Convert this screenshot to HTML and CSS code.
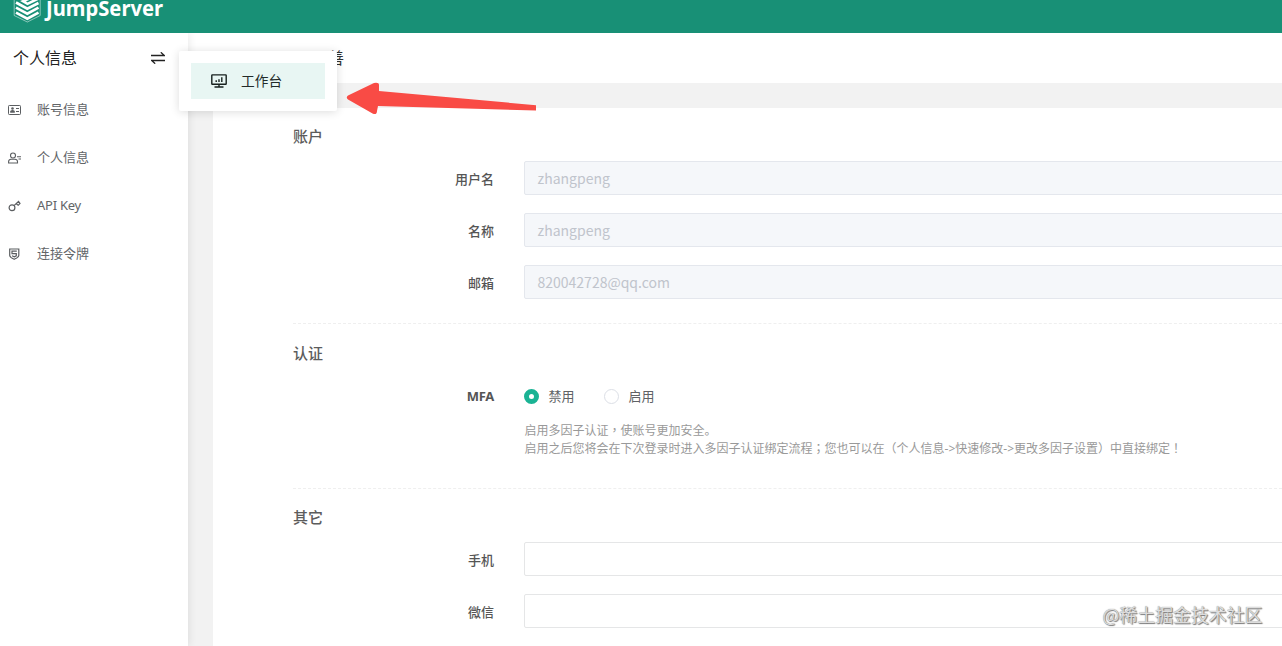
FILE: index.html
```html
<!DOCTYPE html>
<html lang="zh-CN">
<head>
<meta charset="utf-8">
<title>JumpServer</title>
<link rel="stylesheet" href="styles.css">
</head>
<body>
<header class="topbar">
  <svg class="logo" width="180" height="33" viewBox="0 0 180 33">
    <path d="M14.2 -8V15.5L27.3 22L40.200 15.500V-8" fill="none" stroke="#fff" stroke-width=".7" opacity=".7"/>
    <g fill="none" stroke="#fff" stroke-width="2.600">
      <path d="M33 -3L23 1.200L27.500 3.800L38.500 -1.500"/>
      <path d="M16 2.500L27.300 8.700L38.500 3"/>
      <path d="M16 7.700L27.300 13.700L38.500 7.700"/>
      <path d="M16 12.700L27.300 18.700L38.500 12.700"/>
    </g>
    <text class="logo-text" x="46" y="16.400" textLength="117" lengthAdjust="spacingAndGlyphs">JumpServer</text>
  </svg>
</header>
<div class="layout">
  <aside class="sidebar">
    <div class="side-head">
      <span>个人信息</span>
      <svg width="14" height="12" viewBox="0 0 14 12" fill="none" stroke="#222" stroke-width="1.3"><path d="M0 3.500H13.300L9.800 .3M14 8.500H.7L4.200 11.700"/></svg>
    </div>
    <nav class="menu">
      <a class="item"><svg width="13" height="12" viewBox="0 0 13 12" fill="none" stroke="#5b5e61"><rect x=".5" y="1.500" width="12" height="9" rx=".8"/><path d="M8 4.500h3M8 7.500h3"/><circle cx="4.500" cy="4.500" r="1.300" fill="#5b5e61" stroke="none"/><path d="M2.200 8.800V7Q4.500 5 6.800 7V8.800Z" fill="#5b5e61" stroke="none"/></svg>账号信息</a>
      <a class="item"><svg width="13" height="12" viewBox="0 0 13 12" fill="none" stroke="#5b5e61" stroke-width="1.100"><circle cx="5" cy="3.500" r="2.500"/><path d="M.6 11V9.500Q.8 7.300 3 7.200H7Q9.300 7.300 9.500 9.500V11ZM9 4.700h4M10.500 7h2.500"/></svg>个人信息</a>
      <a class="item latin"><svg width="13" height="12" viewBox="0 0 13 12" fill="none" stroke="#5b5e61" stroke-width="1.200"><circle cx="4" cy="7.700" r="2.900"/><path d="M6 5.600L11 1M8.200 3.700L10.200 5.300L12 3.400L10.500 1.400"/></svg>API Key</a>
      <a class="item"><svg width="13" height="12" viewBox="0 0 13 12" fill="none" stroke="#5b5e61" stroke-width="1.200"><path d="M1.700 1H10.800V7.500Q10.500 9.500 6.200 11.300Q2 9.500 1.700 7.500Z"/><path d="M8.800 3.200H4V5.700H8.300V7.800L6.300 8.900L4 7.800"/></svg>连接令牌</a>
    </nav>
  </aside>
  <main class="main">
    <div class="page-head"><h1>善</h1></div>
    <section class="card">
      <h2>账户</h2>
      <div class="row"><label>用户名</label><div class="input disabled">zhangpeng</div></div>
      <div class="row"><label>名称</label><div class="input disabled">zhangpeng</div></div>
      <div class="row"><label>邮箱</label><div class="input disabled">820042728@qq.com</div></div>
      <hr>
      <h2>认证</h2>
      <div class="row radio-row"><label>MFA</label>
        <div class="radios"><span class="radio"><i class="dot on"></i>禁用</span><span class="radio"><i class="dot"></i>启用</span></div>
      </div>
      <p class="help">启用多因子认证<span class="mid" lang="zh-TW">，</span>使账号更加安全。<br>启用之后您将会在下次登录时进入多因子认证绑定流程<span class="mid" lang="zh-TW">；</span>您也可以在<span class="mid" lang="zh-TW">（</span>个人信息-&gt;快速修改-&gt;更改多因子设置<span class="mid" lang="zh-TW">）</span>中直接绑定<span class="mid" lang="zh-TW">！</span></p>
      <hr>
      <h2>其它</h2>
      <div class="row"><label>手机</label><div class="input"></div></div>
      <div class="row"><label>微信</label><div class="input"></div></div>
    </section>
  </main>
</div>
<div class="popup">
  <div class="popup-item">
    <svg width="16" height="14" viewBox="0 0 16 14" fill="none" stroke="#17211f" stroke-width="1.400"><rect x=".8" y=".9" width="14.400" height="9.300" rx=".5"/><path d="M8 10.200V13M3.500 13H12.500M5.200 6.200V8M8 5.200V8M10.800 3.300V8"/></svg>
    <span>工作台</span>
  </div>
</div>
<svg class="arrow" width="192" height="34" viewBox="0 0 192 34"><path d="M2 13.500L28 .9Q33 0 33 3V9L190 23.200V28.500L32 24L31 29Q31 33 27 31.800L2 17.500Q-.5 15.500 2 13.500Z" fill="#f94b45"/></svg>
<div class="watermark">@稀土掘金技术社区</div>
</body>
</html>
```
FILE: styles.css
```css
* { box-sizing: border-box; }
body {
  margin: 0;
  width: 1282px;
  height: 646px;
  overflow: hidden;
  display: flex;
  flex-direction: column;
  position: relative;
  background: #f2f2f2;
  color: #606266;
  font: 13px/18px "Noto Sans", "Noto Sans CJK SC", sans-serif;
}
.topbar { height: 33px; flex: none; background: #189076; }
.logo { display: block; }
.logo-text { font: bold 21.5px "Noto Sans", sans-serif; fill: #fff; }
.layout { flex: 1; display: flex; min-height: 0; }
.sidebar {
  width: 188px;
  flex: none;
  background: #fff;
  box-shadow: 1px 0 8px rgba(0, 0, 0, .09);
  clip-path: inset(0 -10px 0 0);
  z-index: 1;
}
.side-head {
  height: 52px;
  padding: 0 23px 2px 13px;
  display: flex;
  align-items: center;
  justify-content: space-between;
  font-size: 16px;
  color: #222;
}
.menu { display: flex; flex-direction: column; }
.item {
  height: 48px;
  padding-left: 8px;
  display: flex;
  align-items: center;
  gap: 16px;
  color: #626568;
}
.item svg { margin-top: 1px; }
.latin { letter-spacing: -.25px; }
.main { flex: 1; min-width: 0; display: flex; flex-direction: column; overflow: hidden; }
.page-head { height: 50px; flex: none; background: #fff; padding-left: 140px; }
h1 { margin: 0; font-size: 16px; line-height: 50px; font-weight: 400; color: #333; }
.card {
  flex: 1;
  margin: 25px 0 0 25px;
  padding: 18px 0 0 80px;
  background: #fff;
}
h2 { margin: 0 0 15px; font-size: 15px; line-height: 20px; font-weight: 500; color: #5c5c5c; }
.row { display: flex; align-items: center; height: 34px; margin-bottom: 18px; }
label {
  width: 201px;
  margin-right: 29.500px;
  padding-top: 1px;
  flex: none;
  text-align: right;
  font-weight: 500;
  color: #555;
}
.input {
  flex: 1;
  height: 34px;
  margin-right: -4px;
  padding: 0 13px;
  border: 1px solid #e5e6e7;
  border-radius: 2px;
  font: 14px/33px "Noto Sans CJK SC", sans-serif;
}
.disabled { background: #f5f7fa; border-color: #e4e7ed; color: #c0c4cc; }
hr { margin: 24px 0 19px; border: 0; border-top: 1px dashed #efefef; }
.radio-row { height: 34px; margin-bottom: 10px; }
.radio-row label { font-weight: 700; letter-spacing: -.3px; }
.radios { display: flex; gap: 29px; padding-top: 2px; }
.radio { display: flex; align-items: center; gap: 10px; }
.dot { width: 15px; height: 15px; border: 1px solid #dcdfe6; border-radius: 50%; }
.dot.on { border: 5.5px solid #1ab394; background: #fff; }
.help { margin: 0 0 30px 231.5px; height: 36px; font-size: 12px; line-height: 18px; color: #999; white-space: nowrap; }
hr ~ hr { margin-bottom: 18px; }
.mid { font-family: "Noto Sans CJK TC", sans-serif; line-height: 1; }
.popup {
  position: absolute;
  left: 179px;
  top: 51px;
  z-index: 2;
  width: 158px;
  height: 60px;
  padding: 12px;
  background: #fff;
  border-radius: 2px;
  box-shadow: 0 1px 10px rgba(0, 0, 0, .14);
}
.popup-item {
  height: 36px;
  padding-left: 20px;
  display: flex;
  align-items: center;
  gap: 14px;
  background: #e8f6f3;
  color: #222b29;
  font-size: 13.700px;
}
.arrow { position: absolute; left: 346px; top: 82px; z-index: 3; }
.watermark {
  position: absolute;
  right: 19.5px;
  top: 602px;
  z-index: 3;
  font: 17.900px/24px "Noto Sans CJK SC", sans-serif;
  color: #ddd;
  text-shadow: 0 0 1px #777, 1px 1px 1px #777;
}
```
